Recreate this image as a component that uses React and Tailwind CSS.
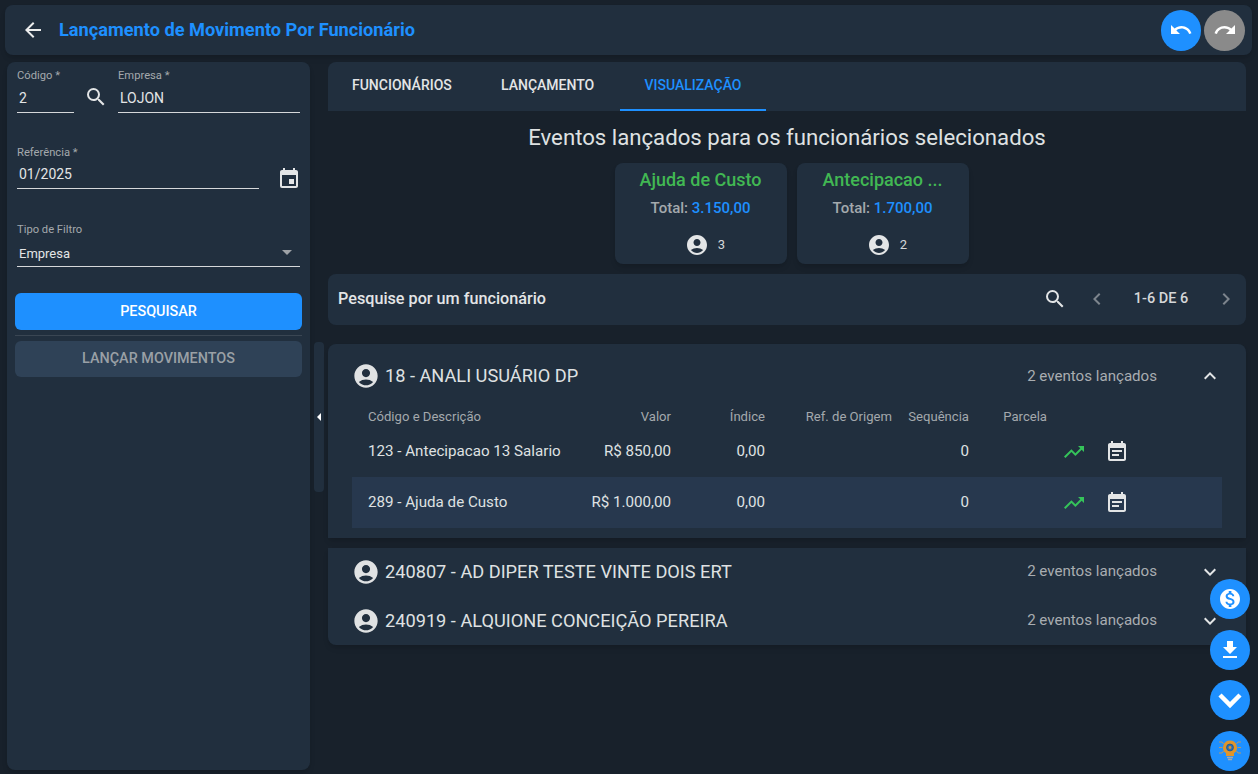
import {
  MdAccountCircle,
  MdArrowBack,
  MdArrowDropDown,
  MdChevronLeft,
  MdChevronRight,
  MdEvent,
  MdEventNote,
  MdExpandLess,
  MdExpandMore,
  MdFileDownload,
  MdMonetizationOn,
  MdRedo,
  MdSearch,
  MdTrendingUp,
  MdUndo,
} from "react-icons/md";

const linhas = [
  { descricao: "123 - Antecipacao 13 Salario", valor: "R$ 850,00", destaque: false },
  { descricao: "289 - Ajuda de Custo", valor: "R$ 1.000,00", destaque: true },
];

const cartoes = [
  { titulo: "Ajuda de Custo", total: "3.150,00", qtd: 3 },
  { titulo: "Antecipacao ...", total: "1.700,00", qtd: 2 },
];

const gridTabela = "grid grid-cols-[224px_79px_94px_127px_77px_78px_39px_43px] items-center px-4";

function Campo({ label, value, className, valueClass = "mt-[5px] pb-[4px] text-[14px]", children }) {
  return (
    <div className={className}>
      <div className="text-[11.2px] leading-[14px] text-[#a4a9ad]">{label}</div>
      <div className={`flex h-[25px] items-center justify-between border-b border-[#d6d8da] pl-[2px] text-[#e3e5e6] ${valueClass}`}>
        {value}
        {children}
      </div>
    </div>
  );
}

function Funcionario({ nome, className = "", children }) {
  return (
    <div className={`flex items-center justify-between pl-[24px] pr-[24px] ${className}`}>
      <div className="flex items-center gap-[5px]">
        <MdAccountCircle className="text-[28px] text-[#e0e2e3]" />
        <span className="text-[18.2px] text-[#dfe1e2]">{nome}</span>
      </div>
      <div className="flex items-center">
        <span className="mr-[41px] text-[15.1px] text-[#a9adb1]">2 eventos lançados</span>
        {children}
      </div>
    </div>
  );
}

function BotaoFlutuante({ className = "", children }) {
  return (
    <button className={`flex h-10 w-10 items-center justify-center rounded-full bg-[#1e90ff] text-white ${className}`}>
      {children}
    </button>
  );
}

export default function App() {
  return (
    <div className="relative h-[774px] w-[1258px] overflow-hidden bg-[#18212b] pt-[5px] font-['Roboto',sans-serif]">
      <header className="ml-[5px] mr-[6px] flex h-[50px] items-center justify-between rounded-lg bg-[#212f3e] pl-[16px] pr-[7px] shadow-md">
        <div className="flex items-center gap-[14px]">
          <MdArrowBack className="text-[24px] text-[#eceded]" />
          <h1 className="text-[18.2px] font-bold text-[#1e90ff]">Lançamento de Movimento Por Funcionário</h1>
        </div>
        <div className="flex items-center gap-[3px]">
          <div className="flex h-[41px] w-10 items-center justify-center rounded-full bg-[#1e90ff] text-white">
            <MdUndo className="text-[24px]" />
          </div>
          <div className="flex h-[41px] w-[41px] items-center justify-center rounded-full bg-[#8a8a8a] text-white">
            <MdRedo className="text-[24px]" />
          </div>
        </div>
      </header>

      <div className="mt-[7px] flex h-[708px] pl-[7px]">
        <aside className="flex w-[303px] flex-col rounded-lg bg-[#212f3e] px-[8px] pt-[7px] shadow-md">
          <div className="flex items-start px-[2px]">
            <Campo label="Código *" value="2" className="w-[57px]" />
            <MdSearch className="ml-[10px] mt-[16px] text-[24px] text-[#e3e5e6]" />
            <Campo label="Empresa *" value="LOJON" className="ml-[10px] flex-1" />
          </div>
          <div className="mt-[33px] flex items-start px-[2px]">
            <Campo label="Referência *" value="01/2025" className="w-[242px] shrink-0" valueClass="mt-[4px] pb-[4px] text-[14px]" />
            <MdEvent className="ml-[18px] mt-[21px] shrink-0 text-[24px] text-[#e3e5e6]" />
          </div>
          <div className="mt-[32px] px-[2px]">
            <Campo label="Tipo de Filtro" value="Empresa" valueClass="mt-[5px] text-[13px]">
              <MdArrowDropDown className="mb-[4px] mr-[1px] text-[24px] text-[#9ea2a6]" />
            </Campo>
          </div>
          <button className="mt-[26px] h-[37px] rounded-md bg-[#1e90ff] text-[14.4px] font-medium text-white">PESQUISAR</button>
          <div className="mt-[5px] h-px bg-[#3a4653]" />
          <button className="mt-[5px] h-[36px] rounded-md bg-[#2f4257] text-[14.4px] font-medium text-[#9aa0a6]">LANÇAR MOVIMENTOS</button>
        </aside>

        <div className="ml-[4px] mr-[4px] mt-[280px] flex h-[150px] w-[10px] items-center justify-center rounded bg-[#212f3e]">
          <div className="h-0 w-0 border-y-[4px] border-r-[4px] border-y-transparent border-r-white" />
        </div>

        <main className="w-[918px]">
          <nav className="flex h-[49px] rounded-t-lg bg-[#212f3e] text-[14px] font-medium">
            <div className="flex w-[149px] items-center pl-[24px] pb-[3px] text-[#e3e5e6]">FUNCIONÁRIOS</div>
            <div className="flex w-[143px] items-center pl-[24px] pb-[3px] text-[#e3e5e6]">LANÇAMENTO</div>
            <div className="flex w-[146px] items-center justify-center border-b-2 border-[#1e90ff] pb-[1px] text-[#1e90ff]">VISUALIZAÇÃO</div>
          </nav>

          <h2 className="mt-[11px] text-center text-[22.2px] leading-[30px] text-[#dfe1e2]">Eventos lançados para os funcionários selecionados</h2>

          <div className="mt-[11px] flex justify-center gap-[10px] pl-[9px]">
            {cartoes.map((c) => (
              <div key={c.titulo} className="flex h-[101px] w-[172px] flex-col items-center rounded-lg bg-[#212f3e] shadow-md">
                <div className="mt-[5px] text-[18px] font-medium leading-[24px] text-[#41b853]">{c.titulo}</div>
                <div className="mt-[6px] text-[15px] font-medium leading-[20px] text-[#a4a9ad]">
                  Total: <span className="text-[#1e90ff]">{c.total}</span>
                </div>
                <div className="mt-[15px] flex items-center gap-[9px] pl-[9px] text-[13px] text-[#d5d7d9]">
                  <MdAccountCircle className="text-[24px] text-[#e3e5e6]" />
                  <span>{c.qtd}</span>
                </div>
              </div>
            ))}
          </div>

          <div className="mt-[10px] flex h-[51px] items-center justify-between rounded-lg bg-[#212f3e] pb-[1px] pl-[10px] pr-[8px]">
            <span className="text-[16.2px] font-medium text-[#e3e5e6]">Pesquise por um funcionário</span>
            <div className="flex items-center">
              <MdSearch className="text-[24px] text-[#e3e5e6]" />
              <MdChevronLeft className="ml-[18px] text-[24px] text-[#7d858d]" />
              <span className="ml-[24px] w-[56px] text-center text-[14.5px] font-medium text-[#d5d7d9]">1-6 DE 6</span>
              <MdChevronRight className="ml-[25px] text-[24px] text-[#7d858d]" />
            </div>
          </div>

          <section className="mt-[19px] h-[194px] rounded-t-lg bg-[#212f3e] shadow-md">
            <Funcionario nome="18 - ANALI USUÁRIO DP" className="h-[64px]">
              <MdExpandLess className="text-[24px] text-[#e3e5e6]" />
            </Funcionario>
            <div className="mx-[24px]">
              <div className={`${gridTabela} text-[13.1px] leading-[18px] text-[#a4a9ad]`}>
                <span>Código e Descrição</span>
                <span className="text-right">Valor</span>
                <span className="text-right">Índice</span>
                <span className="text-right">Ref. de Origem</span>
                <span className="text-right">Sequência</span>
                <span className="text-right">Parcela</span>
              </div>
              {linhas.map((l) => (
                <div
                  key={l.descricao}
                  className={`${gridTabela} h-[51px] whitespace-nowrap text-[15.15px] text-[#dfe1e2] ${l.destaque ? "bg-[#27384e]" : ""}`}
                >
                  <span>{l.descricao}</span>
                  <span className="flex justify-end">{l.valor}</span>
                  <span className="text-right">0,00</span>
                  <span />
                  <span className="text-right">0</span>
                  <span />
                  <span className="flex justify-end">
                    <MdTrendingUp className="text-[24px] text-[#35c45a]" />
                  </span>
                  <span className="flex justify-end">
                    <MdEventNote className="text-[24px] text-[#e3e5e6]" />
                  </span>
                </div>
              ))}
            </div>
          </section>

          <section className="mt-[10px] h-[97px] rounded-b-lg bg-[#212f3e] pt-[2px] shadow-md">
            <Funcionario nome="240807 - AD DIPER TESTE VINTE DOIS ERT" className="h-[43px]">
              <MdExpandMore className="text-[24px] text-[#e3e5e6]" />
            </Funcionario>
            <Funcionario nome="240919 - ALQUIONE CONCEIÇÃO PEREIRA" className="mt-[6px] h-[43px]">
              <MdExpandMore className="text-[24px] text-[#e3e5e6]" />
            </Funcionario>
          </section>
        </main>
      </div>

      <div className="absolute left-[1210px] top-[579px] flex flex-col gap-[10px]">
        <BotaoFlutuante>
          <MdMonetizationOn className="text-[24px]" />
        </BotaoFlutuante>
        <BotaoFlutuante className="mt-px">
          <MdFileDownload className="text-[24px]" />
        </BotaoFlutuante>
        <BotaoFlutuante>
          <svg width="26" height="26" viewBox="0 0 26 26" fill="none" stroke="white" strokeWidth="4.5">
            <path d="M3 8l10 10 10-10" />
          </svg>
        </BotaoFlutuante>
        <BotaoFlutuante className="mt-px">
          <svg width="24" height="26" viewBox="0 0 24 26" fill="none">
            <path d="M12 2.5a7 7 0 0 0-4 12.7V18h8v-2.8a7 7 0 0 0-4-12.7z" fill="#e0952b" />
            <circle cx="12" cy="9.5" r="3.4" fill="#2f6fb0" stroke="#1f5a96" strokeWidth="1" />
            <circle cx="12" cy="9.5" r="1.4" fill="#e0952b" />
            <path d="M9 19.5h6M10 21.5h4" stroke="#a8a8a8" strokeWidth="1.5" />
            <path d="M1 4h3l1.5 2M1 9.5h3.5M1 15h3l1.5-2M23 4h-3l-1.5 2M23 9.5h-3.5M23 15h-3l-1.5-2" stroke="#d99a45" strokeWidth="0.8" />
          </svg>
        </BotaoFlutuante>
      </div>
    </div>
  );
}
